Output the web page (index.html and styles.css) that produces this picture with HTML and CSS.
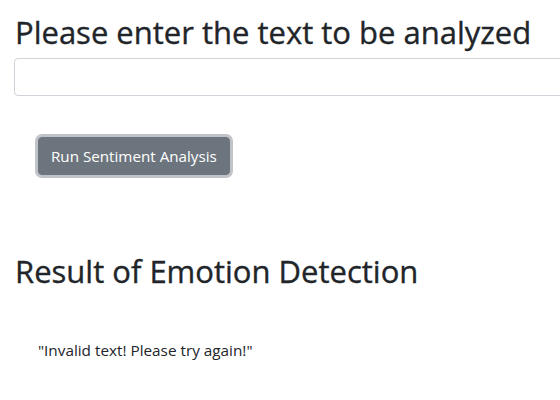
FILE: index.html
```html
<!DOCTYPE html>
<html>
<head>
<meta charset="utf-8">
<link rel="stylesheet" href="styles.css">
</head>
<body>
<div class="page">
  <h2 class="title">Please enter the text to be analyzed</h2>
  <input class="field" type="text">
  <div class="actions">
    <button class="btn">Run Sentiment Analysis</button>
  </div>
  <h2 class="title result-title">Result of Emotion Detection</h2>
  <p class="result">"Invalid text! Please try again!"</p>
</div>
</body>
</html>
```
FILE: styles.css
```css
html, body {
  margin: 0;
  padding: 0;
  background: #fff;
  overflow: hidden;
}
body {
  font-family: "Open Sans", "Noto Sans", sans-serif;
  color: #212529;
}
.page {
  padding: 0 14px;
}
.title {
  font-size: 31px;
  font-weight: 500;
  line-height: 1.2;
  margin: 14px 0 0 1px;
  -webkit-text-stroke: 0.35px #212529;
}
.field {
  display: block;
  box-sizing: border-box;
  width: 600px;
  height: 38px;
  margin-top: 7px;
  border: 1px solid #ced4da;
  border-radius: 4px;
  background: #fff;
}
.actions {
  padding: 41px 24px 0;
}
.btn {
  font-family: inherit;
  font-size: 15.2px;
  line-height: 24px;
  padding: 6px 12px;
  color: #fff;
  background: #6c757d;
  border: 1px solid #6c757d;
  border-radius: 4px;
  box-shadow: 0 0 0 3px rgba(130,138,145,.5);
}
.result-title {
  margin-top: 78px;
}
.result {
  font-size: 15.3px;
  margin: 50px 0 0 24px;
}
```
